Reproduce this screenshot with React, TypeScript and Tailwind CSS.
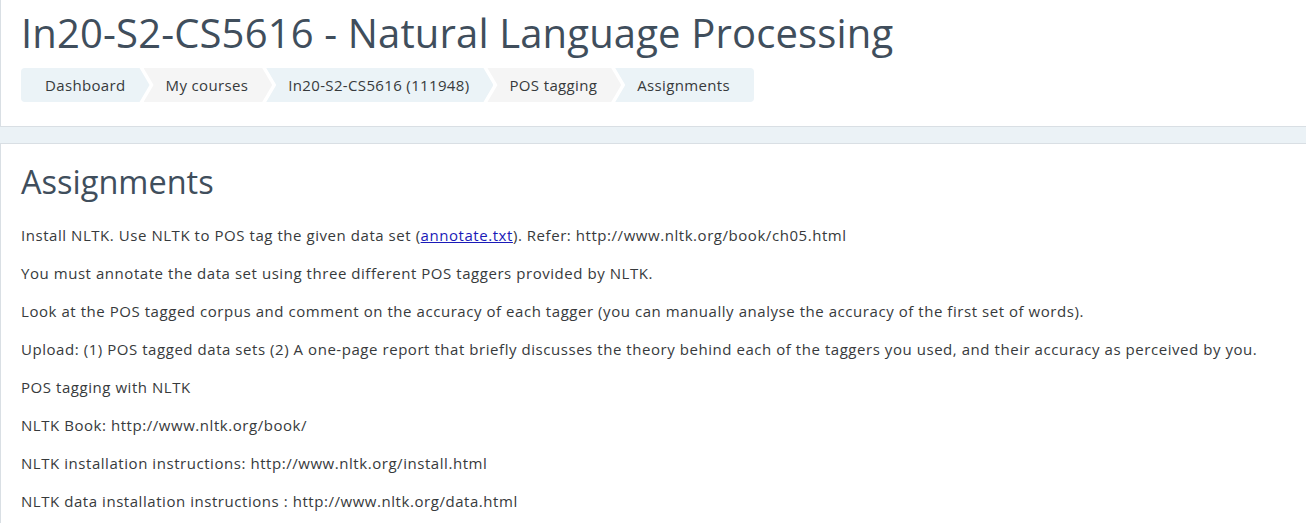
const crumbs = ['Dashboard', 'My courses', 'In20-S2-CS5616 (111948)', 'POS tagging', 'Assignments']

const paras = [
  'You must annotate the data set using three different POS taggers provided by NLTK.',
  'Look at the POS tagged corpus and comment on the accuracy of each tagger (you can manually analyse the accuracy of the first set of words).',
  'Upload: (1) POS tagged data sets (2) A one-page report that briefly discusses the theory behind each of the taggers you used, and their accuracy as perceived by you.',
  'POS tagging with NLTK',
  'NLTK Book: http://www.nltk.org/book/',
  'NLTK installation instructions: http://www.nltk.org/install.html',
  'NLTK data installation instructions : http://www.nltk.org/data.html',
]

function Breadcrumb() {
  return (
    <div className="flex h-[34px]">
      {crumbs.map((c, i) => {
        const first = i === 0
        const last = i === crumbs.length - 1
        const clip = first
          ? 'polygon(0 0, calc(100% - 10px) 0, 100% 50%, calc(100% - 10px) 100%, 0 100%)'
          : last
            ? 'polygon(0 0, 100% 0, 100% 100%, 0 100%, 10px 50%)'
            : 'polygon(0 0, calc(100% - 10px) 0, 100% 50%, calc(100% - 10px) 100%, 0 100%, 10px 50%)'
        return (
          <div
            key={c}
            className={`flex items-center text-[15px] tracking-[0.35px] text-[#373a3c] whitespace-nowrap
              ${i % 2 === 0 ? 'bg-[#ebf3f7]' : 'bg-[#f5f5f5]'}
              ${first ? 'pl-[24px] rounded-l' : 'pl-[22px] -ml-[6px]'}
              ${last ? 'pr-[24px] rounded-r' : 'pr-[24px]'}`}
            style={{ clipPath: clip }}
          >
            {c}
          </div>
        )
      })}
    </div>
  )
}

export default function App() {
  return (
    <div className="min-h-screen bg-[#ebf2f6]" style={{ fontFamily: '"Open Sans", "Noto Sans", sans-serif' }}>
      {/* page header */}
      <div className="bg-white border-l border-b border-[#d9dfe4] pl-5 pt-[8px] pb-[24px]">
        <h1 className="text-[40px] leading-[50px] tracking-[0.15px] text-[#404e5c] mb-[10px]">
          In20-S2-CS5616 - Natural Language Processing
        </h1>
        <Breadcrumb />
      </div>

      <div className="h-4" />

      {/* main content */}
      <div className="bg-white border-l border-t border-[#d9dfe4] pl-5 pt-[16px] pb-6 min-h-[400px]">
        <h2 className="text-[32.5px] leading-[44px] text-[#404e5c] mb-[20px]">Assignments</h2>
        <div className="text-[15px] leading-[22px] tracking-[0.55px] text-[#373a3c]">
          <p className="mb-4">
            Install NLTK. Use NLTK to POS tag the given data set (
            <a className="text-[#1a1ab8] underline">annotate.txt</a>
            ). Refer: http://www.nltk.org/book/ch05.html
          </p>
          {paras.map(p => (
            <p key={p} className="mb-4">{p}</p>
          ))}
        </div>
      </div>
    </div>
  )
}
